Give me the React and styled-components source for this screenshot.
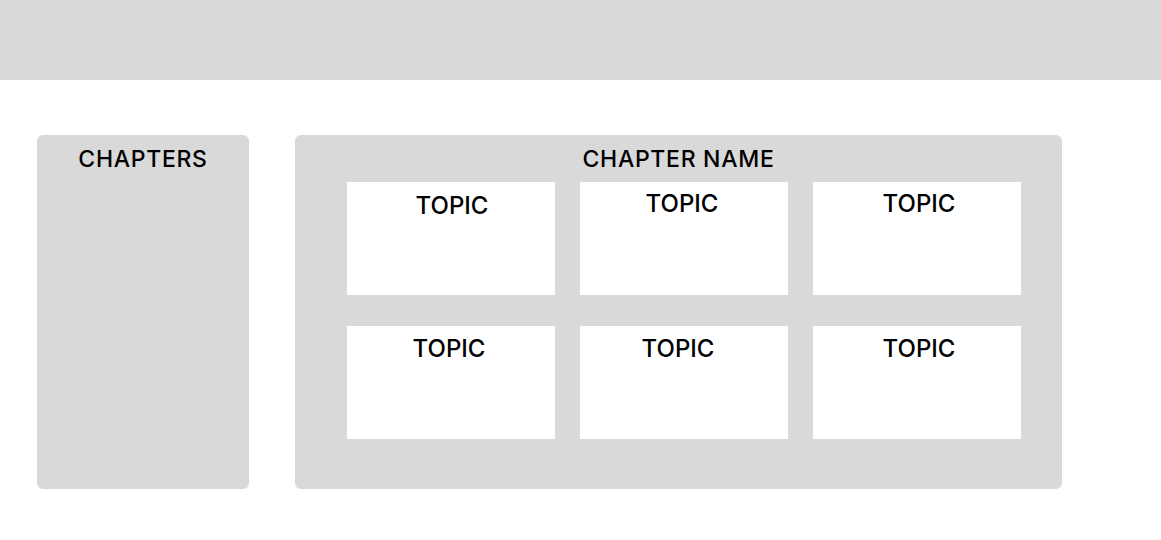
import React from "react";
import styled, { createGlobalStyle } from "styled-components";

const GlobalStyle = createGlobalStyle`
  body {
    margin: 0;
    background: #ffffff;
    font-family: Inter, "Noto Sans", sans-serif;
    color: #000000;
  }
`;

const TopBar = styled.header`
  height: 80px;
  background-color: #d9d9d9;
`;

const Content = styled.main`
  display: flex;
  align-items: flex-start;
  gap: 46px;
  padding: 55px 0 0 37px;
`;

const Sidebar = styled.aside`
  width: 212px;
  height: 354px;
  box-sizing: border-box;
  padding-top: 9.5px;
  background-color: #d9d9d9;
  border-radius: 6px;
`;

const PanelTitle = styled.h2`
  margin: 0;
  font-size: 23px;
  font-weight: 500;
  letter-spacing: 0.7px;
  line-height: 28px;
  text-align: center;
`;

const ChapterPanel = styled.section`
  width: 767px;
  height: 354px;
  box-sizing: border-box;
  padding-top: 10px;
  background-color: #d9d9d9;
  border-radius: 6px;

  ${PanelTitle} {
    margin-bottom: 9px;
  }
`;

const TopicGrid = styled.div`
  display: grid;
  grid-template-columns: repeat(3, 208px);
  grid-auto-rows: 113px;
  column-gap: 25px;
  row-gap: 31px;
  margin-left: 52px;
`;

const TopicCard = styled.div`
  box-sizing: border-box;
  background-color: #ffffff;
  padding-top: ${props => props.top}px;
`;

const TopicLabel = styled.div`
  font-size: 24px;
  font-weight: 500;
  line-height: 29px;
  text-align: center;
  transform: translateX(${props => props.shift || 0}px);
`;

const topics = [
  { top: 9, shift: 1 },
  { top: 7.2, shift: -2 },
  { top: 7.2, shift: 2 },
  { top: 8.2, shift: -2 },
  { top: 8.2, shift: -6 },
  { top: 8.2, shift: 2 },
];

export default function App() {
  return (
    <>
      <GlobalStyle />
      <TopBar />
      <Content>
        <Sidebar>
          <PanelTitle>CHAPTERS</PanelTitle>
        </Sidebar>
        <ChapterPanel>
          <PanelTitle>CHAPTER NAME</PanelTitle>
          <TopicGrid>
            {topics.map((t, i) => (
              <TopicCard key={i} top={t.top}>
                <TopicLabel shift={t.shift}>TOPIC</TopicLabel>
              </TopicCard>
            ))}
          </TopicGrid>
        </ChapterPanel>
      </Content>
    </>
  );
}
